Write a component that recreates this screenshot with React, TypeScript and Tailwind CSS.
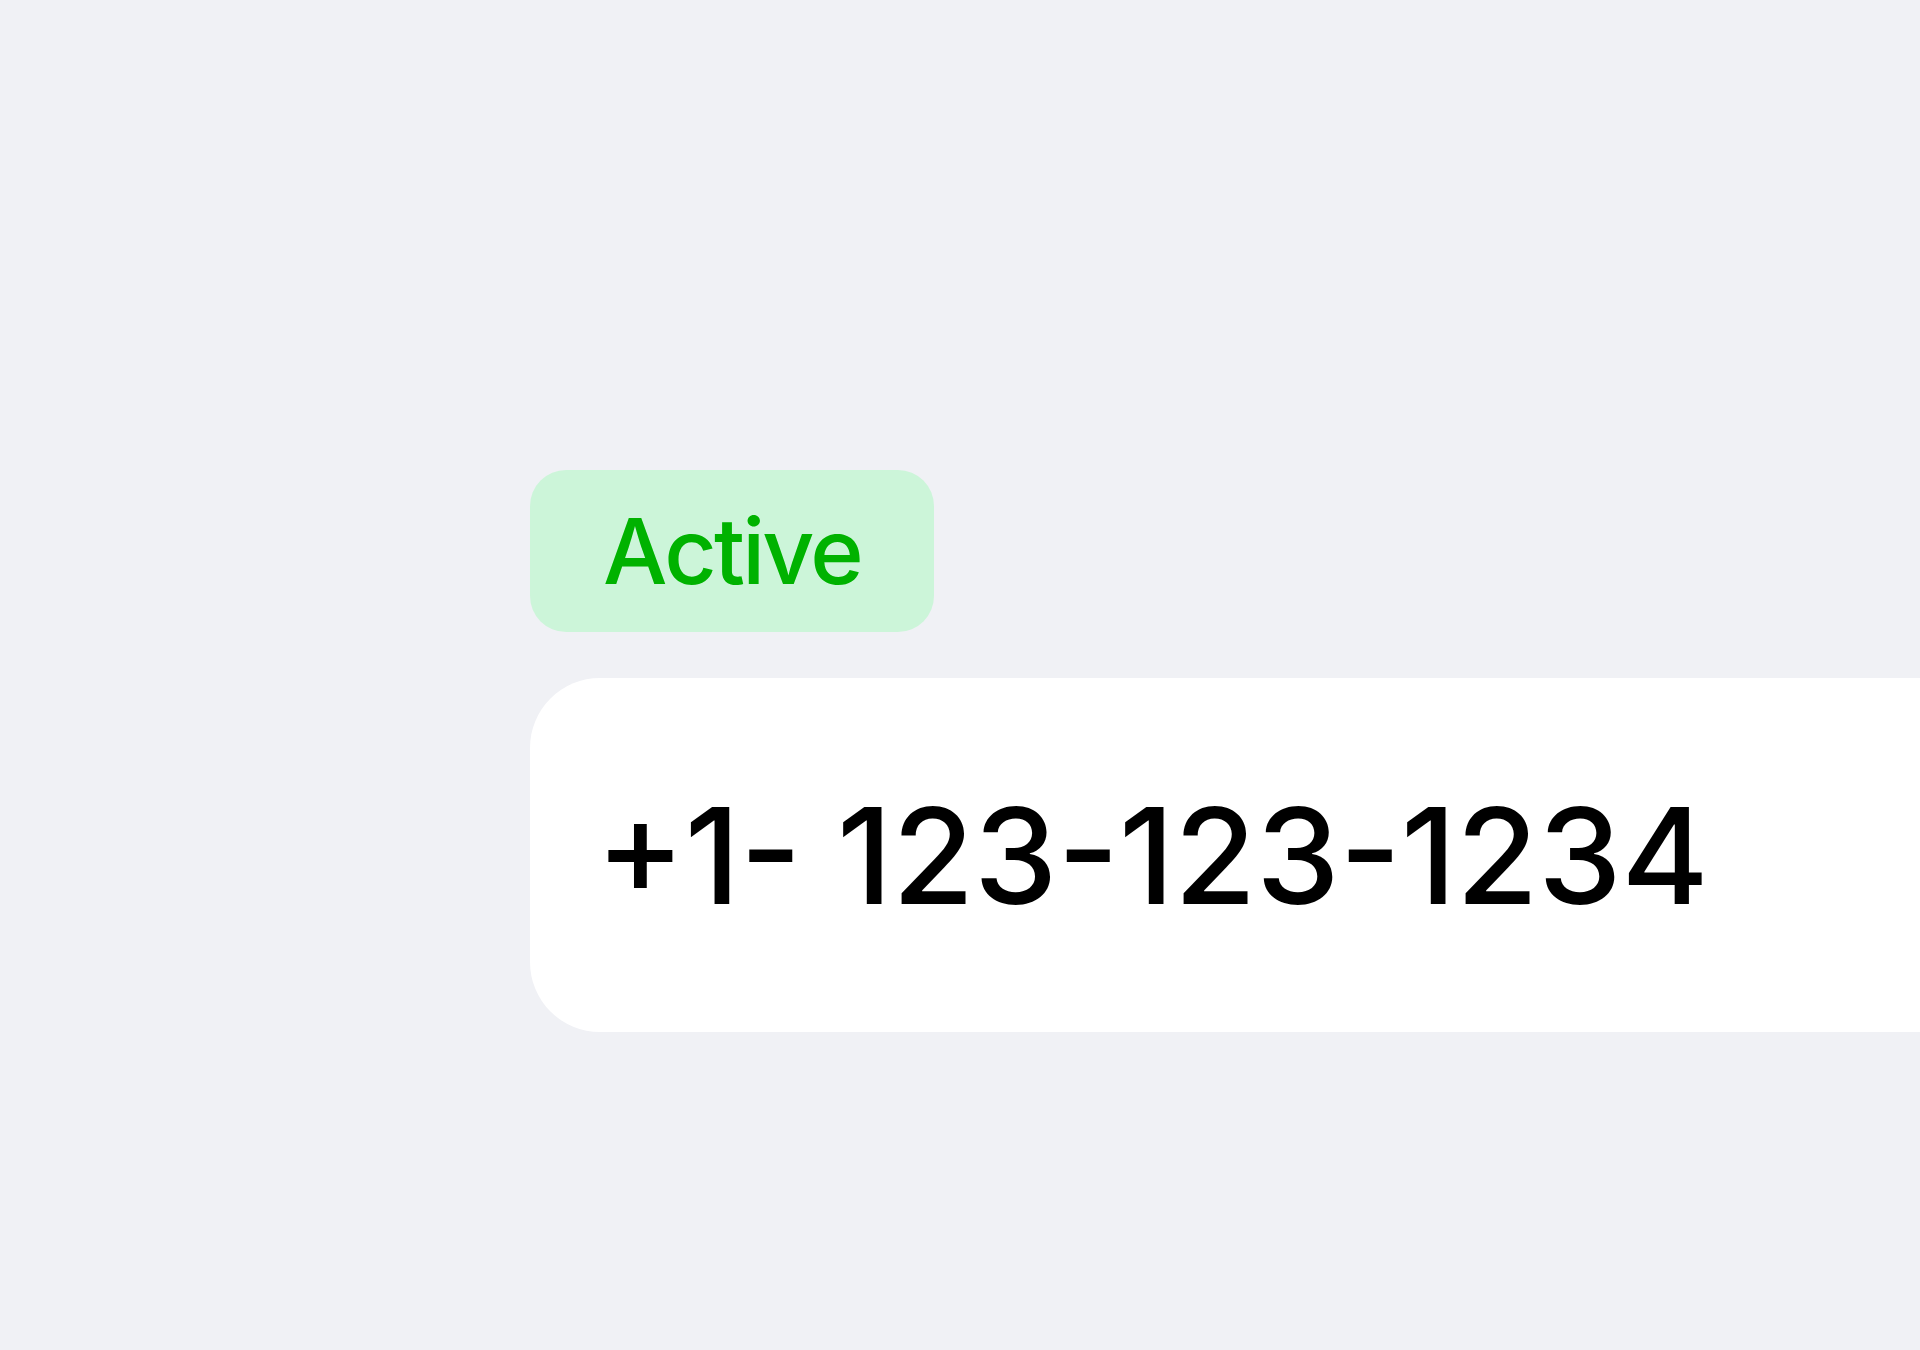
export default function App() {
  return (
    <div
      className="min-h-[1350px] w-full overflow-hidden bg-[#f0f1f5] pl-[530px] pt-[470px]"
      style={{ fontFamily: "Inter, 'Noto Sans', sans-serif" }}
    >
      <div className="flex flex-col items-start gap-[46px]">
        <div className="flex h-[162px] w-[404px] items-center justify-center rounded-[36px] bg-[#ccf5d9]">
          <span className="text-[91px] font-medium leading-none tracking-[-0.03em] text-[#00b200]">
            Active
          </span>
        </div>
        <div className="flex h-[354px] w-[1500px] shrink-0 items-center rounded-[70px] bg-white pl-[66px]">
          <span className="text-[133px] font-medium leading-none text-black whitespace-nowrap">
            +1- 123-123-1234
          </span>
        </div>
      </div>
    </div>
  );
}
